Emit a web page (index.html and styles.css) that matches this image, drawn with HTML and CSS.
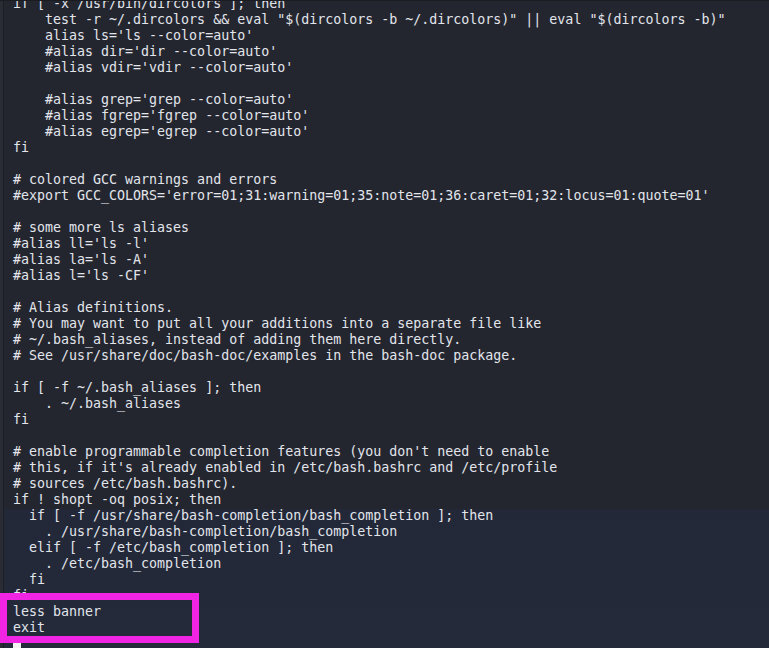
FILE: index.html
```html
<!DOCTYPE html>
<html>
<head>
<meta charset="utf-8">
<link rel="stylesheet" href="styles.css">
</head>
<body>
<div class="term">
<pre class="code">if [ -x /usr/bin/dircolors ]; then
    test -r ~/.dircolors &amp;&amp; eval "$(dircolors -b ~/.dircolors)" || eval "$(dircolors -b)"
    alias ls='ls --color=auto'
    #alias dir='dir --color=auto'
    #alias vdir='vdir --color=auto'

    #alias grep='grep --color=auto'
    #alias fgrep='fgrep --color=auto'
    #alias egrep='egrep --color=auto'
fi

# colored GCC warnings and errors
#export GCC_COLORS='error=01;31:warning=01;35:note=01;36:caret=01;32:locus=01:quote=01'

# some more ls aliases
#alias ll='ls -l'
#alias la='ls -A'
#alias l='ls -CF'

# Alias definitions.
# You may want to put all your additions into a separate file like
# ~/.bash_aliases, instead of adding them here directly.
# See /usr/share/doc/bash-doc/examples in the bash-doc package.

if [ -f ~/.bash_aliases ]; then
    . ~/.bash_aliases
fi

# enable programmable completion features (you don't need to enable
# this, if it's already enabled in /etc/bash.bashrc and /etc/profile
# sources /etc/bash.bashrc).
if ! shopt -oq posix; then
  if [ -f /usr/share/bash-completion/bash_completion ]; then
    . /usr/share/bash-completion/bash_completion
  elif [ -f /etc/bash_completion ]; then
    . /etc/bash_completion
  fi
fi
less banner
exit
<span class="cursor"> </span></pre>
  <div class="mark"></div>
</div>
</body>
</html>
```
FILE: styles.css
```css
html, body {
  margin: 0;
  padding: 0;
  width: 769px;
  height: 648px;
  overflow: hidden;
  background: #23252e;
}
.term {
  position: relative;
  width: 769px;
  height: 648px;
  overflow: hidden;
  background: linear-gradient(to bottom, #24262f 0, #24262f 508px, #232838 508px, #242a3a 648px);
  border-top: 1px solid #1b1c22;
  box-sizing: border-box;
}
.term::before {
  content: "";
  position: absolute;
  left: 0;
  top: 0;
  width: 3px;
  height: 648px;
  background: #2a2c35;
  border-right: 1px solid #1d1e24;
}
.code {
  position: relative;
  margin: -5px 0 0 0;
  padding: 0 0 0 13px;
  font-family: "DejaVu Sans Mono", "Liberation Mono", monospace;
  font-size: 13.3px;
  line-height: 16px;
  color: #e2e5ec;
  white-space: pre;
}
.cursor {
  display: inline-block;
  width: 8px;
  height: 16px;
  vertical-align: top;
  background: #f2f2f2;
}
.mark {
  position: absolute;
  left: 0;
  top: 592px;
  width: 199px;
  height: 50px;
  box-sizing: border-box;
  border: 7px solid #f024e2;
}
```
